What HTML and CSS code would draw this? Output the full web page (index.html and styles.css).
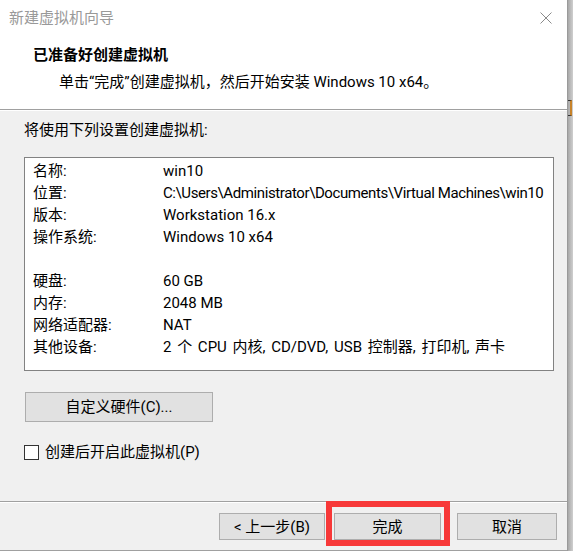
FILE: index.html
```html
<!DOCTYPE html>
<html lang="zh-CN">
<head>
<meta charset="utf-8">
<title>新建虚拟机向导</title>
<link rel="stylesheet" href="styles.css">
</head>
<body>
<div class="screen">
  <div class="dialog">
    <div class="header">
      <div class="titlebar">
        <span class="title">新建虚拟机向导</span>
        <svg class="close" width="12" height="12" viewBox="0 0 12 12"><path d="M0.5 0.5 L11.5 11.5 M11.5 0.5 L0.5 11.5" stroke="#8a8a8a" stroke-width="1" fill="none"/></svg>
      </div>
      <div class="head">
        <div class="h1">已准备好创建虚拟机</div>
        <div class="sub">单击“完成”创建虚拟机，然后开始安装 Windows 10 x64。</div>
      </div>
    </div>
    <div class="body">
      <div class="intro">将使用下列设置创建虚拟机:</div>
      <div class="summary">
        <div class="row"><span class="k">名称:</span><span class="v">win10</span></div>
        <div class="row"><span class="k">位置:</span><span class="v path">C:\Users\Administrator\Documents\Virtual Machines\win10</span></div>
        <div class="row"><span class="k">版本:</span><span class="v">Workstation 16.x</span></div>
        <div class="row"><span class="k">操作系统:</span><span class="v">Windows 10 x64</span></div>
        <div class="row"></div>
        <div class="row"><span class="k">硬盘:</span><span class="v">60 GB</span></div>
        <div class="row"><span class="k">内存:</span><span class="v">2048 MB</span></div>
        <div class="row"><span class="k">网络适配器:</span><span class="v">NAT</span></div>
        <div class="row"><span class="k">其他设备:</span><span class="v devices">2 个 CPU 内核, CD/DVD, USB 控制器, 打印机, 声卡</span></div>
      </div>
      <div class="btn custom">自定义硬件(C)...</div>
      <label class="check"><span class="box"></span><span>创建后开启此虚拟机(P)</span></label>
    </div>
    <div class="footer">
      <div class="btn back">&lt; 上一步(B)</div>
      <div class="finish-wrap">
        <div class="btn finish">完成</div>
        <div class="highlight"></div>
      </div>
      <div class="btn cancel">取消</div>
    </div>
  </div>
  <div class="strip"><span class="glyph"></span></div>
</div>
</body>
</html>
```

FILE: styles.css
```css
* { box-sizing: border-box; }
html, body { margin: 0; padding: 0; }
body {
  width: 573px;
  height: 551px;
  overflow: hidden;
  background: #f0f0f0;
  font-family: Roboto, "Noto Sans CJK SC", sans-serif;
  font-size: 15px;
  color: #000;
}
.screen {
  display: flex;
  width: 573px;
  height: 551px;
}
.dialog {
  width: 568px;
  height: 551px;
  display: flex;
  flex-direction: column;
  background: #f0f0f0;
  border-right: 1px solid #9a9a9a;
}
.header {
  background: #fff;
  height: 110px;
  border-bottom: 1px solid #a0a0a0;
  box-shadow: 0 1px 0 #fff;
  flex: none;
}
.titlebar {
  height: 36px;
  display: flex;
  align-items: center;
  justify-content: space-between;
  padding: 0 15px 0 9px;
}
.title {
  color: #999;
  font-size: 15px;
  line-height: 20px;
}
.close { display: block; }
.head { padding-left: 33px; }
.h1 {
  margin-top: 9px;
  font-weight: bold;
  font-size: 15px;
  line-height: 20px;
}
.sub {
  margin-top: 7px;
  padding-left: 26px;
  line-height: 20px;
}
.body {
  flex: 1;
  padding: 10px 0 0 24px;
  display: flex;
  flex-direction: column;
  align-items: flex-start;
}
.intro { line-height: 20px; }
.summary {
  margin-top: 17px;
  width: 530px;
  height: 214px;
  background: #fff;
  border: 1px solid #828282;
  padding: 2px 0 0 8px;
}
.row {
  display: flex;
  height: 22px;
  line-height: 22px;
  white-space: nowrap;
}
.k { width: 130px; flex: none; }
.path { letter-spacing: -0.4px; }
.devices { word-spacing: 2px; }
.btn {
  background: #e1e1e1;
  border: 1px solid #adadad;
  display: flex;
  align-items: center;
  justify-content: center;
  line-height: 20px;
}
.custom {
  margin: 21px 0 0 1px;
  width: 188px;
  height: 30px;
}
.check {
  margin-top: 20px;
  display: flex;
  align-items: center;
  gap: 6px;
  line-height: 20px;
}
.box {
  width: 15px;
  height: 15px;
  border: 1px solid #333;
  background: #fff;
}
.footer {
  flex: none;
  height: 50px;
  border-top: 1px solid #a0a0a0;
  box-shadow: inset 0 1px 0 #fff;
  border-bottom: 1px solid #a0a0a0;
  display: flex;
  justify-content: flex-end;
  align-items: flex-start;
  padding: 11px 10px 0 0;
}
.footer .btn { height: 27px; }
.back { width: 106px; }
.finish-wrap {
  position: relative;
  margin-left: 9px;
}
.finish { width: 107px; }
.highlight {
  position: absolute;
  left: -8px;
  top: -12px;
  width: 124px;
  height: 45px;
  border: 6px solid #f73838;
}
.cancel { width: 100px; margin-left: 16px; }
.strip {
  width: 5px;
  height: 551px;
  background: linear-gradient(to right, #a8a8a8, #cfcfcf);
  position: relative;
}
.glyph {
  position: absolute;
  left: 0;
  top: 100px;
  width: 4px;
  height: 16px;
  border-right: 2px solid #c8832a;
  border-top: 1px solid #333;
  border-bottom: 1px solid #333;
}
```
